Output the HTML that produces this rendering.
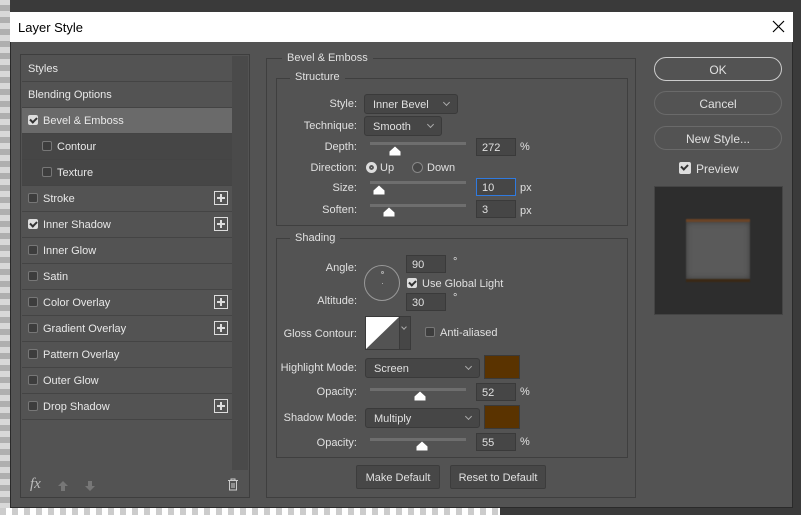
<!DOCTYPE html><html><head><style>
*{box-sizing:border-box;margin:0;padding:0}
body{width:801px;height:515px;overflow:hidden;background:#3a3a3a;font-family:"Liberation Sans",sans-serif;font-size:11px;color:#e0e0e0;position:relative}
.a{position:absolute}
.chk{position:absolute;left:0;top:0;width:10px;height:515px;background-image:repeating-linear-gradient(0deg,#ccc 0 6px,#fff 6px 12px);opacity:.8}
.dlg{left:10px;top:12px;width:783px;height:496px;background:#535353;border:1px solid #2a2a2a}
.title{left:10px;top:12px;width:783px;height:30px;background:#fff;color:#000;font-size:13px;padding:8px 0 0 8px}
.row{position:absolute;left:22px;width:210px;height:26px;border-bottom:1px solid #444;padding:7px 0 0 6px;color:#e8e8e8}
.row.i{padding-left:20px}
.cb{display:inline-block;width:10px;height:10px;border:1px solid #777;border-radius:2px;vertical-align:-1px;margin-right:5px;background:#3d3d3d}
.cb.on{background:#ddd;border-color:#ddd;position:relative}
.cb.on:after{content:"";position:absolute;left:2px;top:0px;width:3px;height:5px;border:solid #333;border-width:0 2px 2px 0;transform:rotate(45deg)}
.plus{position:absolute;right:4px;top:5px;width:14px;height:14px;border:1px solid #ddd}
.plus:before{content:"";position:absolute;left:2px;top:5px;width:8px;height:2px;background:#ddd}
.plus:after{content:"";position:absolute;left:5px;top:2px;width:2px;height:8px;background:#ddd}
.grp{position:absolute;border:1px solid #3f3f3f}
.lg{position:absolute;background:#535353;padding:0 5px;font-size:11px}
.lbl{position:absolute;text-align:right;width:120px;font-size:11px}
.sel{position:absolute;height:20px;background:#464646;border:1px solid #3a3a3a;border-radius:3px;padding:4px 0 0 8px}
.sel:after{content:"";position:absolute;right:8px;top:5px;width:4px;height:4px;border:solid #aaa;border-width:0 1px 1px 0;transform:rotate(45deg)}
.inp{position:absolute;width:40px;height:18px;background:#464646;border:1px solid #3a3a3a;padding:3px 0 0 5px}
.trk{position:absolute;width:96px;height:3px;background:#6e6e6e}
.th{position:absolute;width:12px;height:10px}
.u{position:absolute;font-size:11px}
.btn{position:absolute;left:654px;width:128px;height:24px;border:1px solid #777;border-radius:12px;text-align:center;padding-top:5px;font-size:12px}
.b2{position:absolute;height:24px;background:#474747;border:1px solid #3c3c3c;border-radius:2px;text-align:center;padding-top:6px}
.sw{position:absolute;width:36px;height:24px;background:#5a3300;border:1px solid #3a3a3a}
</style></head><body>
<svg width="0" height="0" style="position:absolute"><defs><symbol id="t" viewBox="0 0 12 10"><path d="M6 0.5L11.5 5.5V9.5H0.5V5.5Z" fill="#fff"/></symbol></defs></svg>
<div class="chk"></div>
<div class="a" style="left:0;top:508px;width:500px;height:7px;background-image:repeating-linear-gradient(90deg,#ccc 0 6px,#fff 6px 12px)"></div>
<div class="a dlg"></div>
<div class="a title">Layer Style</div>
<svg class="a" style="left:772px;top:20px" width="13" height="13"><path d="M1 1L12 12M12 1L1 12" stroke="#000" stroke-width="1.2"/></svg>

<div class="a" style="left:20px;top:54px;width:230px;height:444px;border:1px solid #3e3e3e"></div>
<div class="a" style="left:232px;top:56px;width:16px;height:414px;background:#4a4a4a"></div>
<div class="row" style="top:56px">Styles</div>
<div class="row" style="top:82px">Blending Options</div>
<div class="row" style="top:108px;background:#6a6a6a"><span class="cb on"></span>Bevel &amp; Emboss</div>
<div class="row i" style="top:134px;background:#464646"><span class="cb"></span>Contour</div>
<div class="row i" style="top:160px;background:#464646"><span class="cb"></span>Texture</div>
<div class="row" style="top:186px"><span class="cb"></span>Stroke<div class="plus"></div></div>
<div class="row" style="top:212px"><span class="cb on"></span>Inner Shadow<div class="plus"></div></div>
<div class="row" style="top:238px"><span class="cb"></span>Inner Glow</div>
<div class="row" style="top:264px"><span class="cb"></span>Satin</div>
<div class="row" style="top:290px"><span class="cb"></span>Color Overlay<div class="plus"></div></div>
<div class="row" style="top:316px"><span class="cb"></span>Gradient Overlay<div class="plus"></div></div>
<div class="row" style="top:342px"><span class="cb"></span>Pattern Overlay</div>
<div class="row" style="top:368px"><span class="cb"></span>Outer Glow</div>
<div class="row" style="top:394px"><span class="cb"></span>Drop Shadow<div class="plus"></div></div>
<div class="a" style="left:30px;top:476px;font-size:15px;font-style:italic;color:#bbb;font-family:'Liberation Serif',serif">fx</div>
<svg class="a" style="left:57px;top:480px" width="12" height="12"><path d="M6 1L11 6H8V11H4V6H1Z" fill="#777"/></svg>
<svg class="a" style="left:84px;top:480px" width="12" height="12"><path d="M6 11L11 6H8V1H4V6H1Z" fill="#777"/></svg>
<svg class="a" style="left:227px;top:478px" width="12" height="13"><path d="M1 2.5h10M4 2.5V1h4v1.5M2.5 3v9h7V3M5 5v5M7 5v5" stroke="#ccc" fill="none"/></svg>

<div class="grp" style="left:266px;top:58px;width:370px;height:440px"></div>
<div class="lg" style="left:282px;top:52px">Bevel &amp; Emboss</div>
<div class="grp" style="left:276px;top:78px;width:352px;height:148px"></div>
<div class="lg" style="left:290px;top:71px">Structure</div>
<div class="lbl" style="left:237px;top:98px">Style:</div>
<div class="sel" style="left:364px;top:94px;width:94px">Inner Bevel</div>
<div class="lbl" style="left:237px;top:120px">Technique:</div>
<div class="sel" style="left:364px;top:116px;width:78px">Smooth</div>
<div class="lbl" style="left:237px;top:141px">Depth:</div>
<div class="trk" style="left:370px;top:142px"></div><svg class="th" style="left:389px;top:146px"><use href="#t"/></svg>
<div class="inp" style="left:476px;top:138px">272</div><div class="u" style="left:520px;top:141px">%</div>
<div class="lbl" style="left:237px;top:162px">Direction:</div>
<div class="a" style="left:366px;top:162px;width:11px;height:11px;border-radius:50%;background:#ddd;border:3px solid #ddd;box-shadow:inset 0 0 0 2px #555"></div>
<div class="u" style="left:380px;top:162px">Up</div>
<div class="a" style="left:412px;top:162px;width:11px;height:11px;border-radius:50%;border:1px solid #888;background:#474747"></div>
<div class="u" style="left:427px;top:162px">Down</div>
<div class="lbl" style="left:237px;top:182px">Size:</div>
<div class="trk" style="left:370px;top:181px"></div><svg class="th" style="left:373px;top:185px"><use href="#t"/></svg>
<div class="inp" style="left:476px;top:178px;border-color:#2f7ae0">10</div><div class="u" style="left:520px;top:182px">px</div>
<div class="lbl" style="left:237px;top:204px">Soften:</div>
<div class="trk" style="left:370px;top:204px"></div><svg class="th" style="left:383px;top:207px"><use href="#t"/></svg>
<div class="inp" style="left:476px;top:200px">3</div><div class="u" style="left:520px;top:205px">px</div>

<div class="grp" style="left:276px;top:238px;width:352px;height:220px"></div>
<div class="lg" style="left:290px;top:232px">Shading</div>
<div class="lbl" style="left:237px;top:262px">Angle:</div>
<div class="a" style="left:364px;top:265px;width:36px;height:36px;border-radius:50%;border:1px solid #999"></div>
<div class="a" style="left:381px;top:271px;width:3px;height:3px;border-radius:50%;border:1px solid #aaa"></div>
<div class="a" style="left:382px;top:283px;width:1px;height:1px;background:#aaa"></div>
<div class="inp" style="left:406px;top:255px">90</div><div class="u" style="left:453px;top:256px">°</div>
<div class="a" style="left:407px;top:278px"><span class="cb on"></span>Use Global Light</div>
<div class="lbl" style="left:237px;top:295px">Altitude:</div>
<div class="inp" style="left:406px;top:293px">30</div><div class="u" style="left:453px;top:292px">°</div>
<div class="lbl" style="left:237px;top:328px">Gloss Contour:</div>
<div class="a" style="left:365px;top:316px;width:46px;height:34px;border:1px solid #3a3a3a;background:#464646"></div>
<svg class="a" style="left:366px;top:317px" width="33" height="32"><path d="M0 32L33 0V32Z" fill="#535353"/><path d="M0 0H33L0 32Z" fill="#fff"/></svg>
<div class="a" style="left:399px;top:317px;width:1px;height:32px;background:#3a3a3a"></div>
<div class="a" style="left:402px;top:325px;width:4px;height:4px;border:solid #aaa;border-width:0 1px 1px 0;transform:rotate(45deg)"></div>
<div class="a" style="left:425px;top:327px"><span class="cb"></span>Anti-aliased</div>
<div class="lbl" style="left:237px;top:362px">Highlight Mode:</div>
<div class="sel" style="left:365px;top:358px;width:115px">Screen</div>
<div class="sw" style="left:484px;top:355px"></div>
<div class="lbl" style="left:237px;top:386px">Opacity:</div>
<div class="trk" style="left:370px;top:388px"></div><svg class="th" style="left:414px;top:391px"><use href="#t"/></svg>
<div class="inp" style="left:476px;top:383px">52</div><div class="u" style="left:520px;top:386px">%</div>
<div class="lbl" style="left:237px;top:412px">Shadow Mode:</div>
<div class="sel" style="left:365px;top:408px;width:115px">Multiply</div>
<div class="sw" style="left:484px;top:405px"></div>
<div class="lbl" style="left:237px;top:437px">Opacity:</div>
<div class="trk" style="left:370px;top:438px"></div><svg class="th" style="left:416px;top:441px"><use href="#t"/></svg>
<div class="inp" style="left:476px;top:433px">55</div><div class="u" style="left:520px;top:436px">%</div>
<div class="b2" style="left:356px;top:465px;width:84px">Make Default</div>
<div class="b2" style="left:450px;top:465px;width:96px">Reset to Default</div>

<div class="btn" style="top:57px;border-color:#ccc;border-width:1.5px">OK</div>
<div class="btn" style="top:91px;border-color:#6a6a6a">Cancel</div>
<div class="btn" style="top:126px;border-color:#6a6a6a">New Style...</div>
<div class="a" style="left:679px;top:162px;font-size:12px"><span class="cb on" style="width:12px;height:12px"></span>Preview</div>
<div class="a" style="left:654px;top:186px;width:129px;height:129px;background:#2d2d2d;border:1px solid #444"></div>
<div class="a" style="left:686px;top:219px;width:64px;height:63px;background:#5a5a5a;border-top:3px solid #6a4326;border-bottom:3px solid #3a2815;box-shadow:inset 0 0 6px #3a3a3a;filter:blur(0.6px)"></div>
</body></html>
